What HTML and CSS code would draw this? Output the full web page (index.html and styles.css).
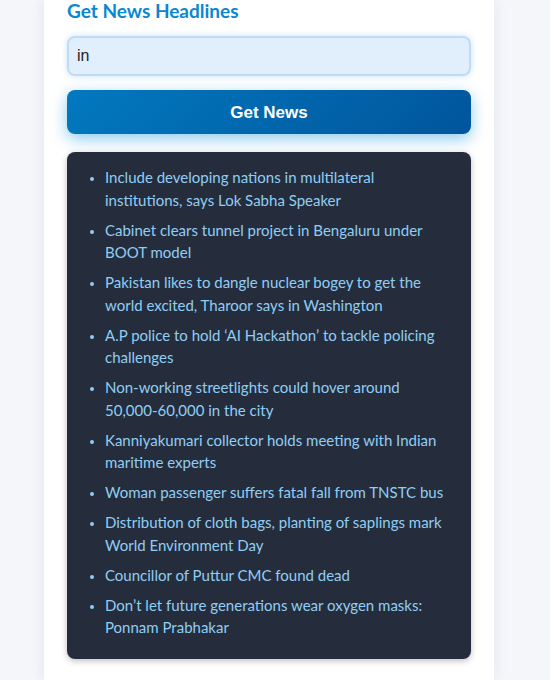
FILE: index.html
```html
<!DOCTYPE html>
<html>
<head>
<meta charset="utf-8">
<link rel="stylesheet" href="styles.css">
</head>
<body>
<div class="card">
  <h1 class="title">Get News Headlines</h1>
  <input class="search" type="text" value="in">
  <button class="btn">Get News</button>
  <ul class="news">
    <li>Include developing nations in multilateral institutions, says Lok Sabha Speaker</li>
    <li>Cabinet clears tunnel project in Bengaluru under BOOT model</li>
    <li>Pakistan likes to dangle nuclear bogey to get the world excited, Tharoor says in Washington</li>
    <li>A.P police to hold ‘AI Hackathon’ to tackle policing challenges</li>
    <li>Non-working streetlights could hover around 50,000-60,000 in the city</li>
    <li>Kanniyakumari collector holds meeting with Indian maritime experts</li>
    <li>Woman passenger suffers fatal fall from TNSTC bus</li>
    <li>Distribution of cloth bags, planting of saplings mark World Environment Day</li>
    <li>Councillor of Puttur CMC found dead</li>
    <li>Don’t let future generations wear oxygen masks: Ponnam Prabhakar</li>
  </ul>
</div>
</body>
</html>
```
FILE: styles.css
```css
html, body {
  margin: 0;
  padding: 0;
  background: #f4f6fa;
  height: 680px;
  overflow: hidden;
}
body {
  font-family: Lato, "Open Sans", sans-serif;
}
.card {
  width: 450px;
  height: 680px;
  box-sizing: border-box;
  margin: 0 0 0 44px;
  padding: 0 23px 20px;
  background: #ffffff;
  box-shadow: 0 0 14px rgba(30, 40, 80, 0.08);
}
.title {
  margin: 0;
  font-size: 19px;
  line-height: 22px;
  font-weight: 700;
  color: #0a87d2;
}
.search {
  display: block;
  box-sizing: border-box;
  width: 100%;
  height: 40px;
  margin-top: 14px;
  padding: 0 8px;
  border: 2px solid #bfdcf7;
  border-radius: 8px;
  background: #e1effc;
  box-shadow: 0 0 6px rgba(100, 170, 240, 0.35);
  font-family: "Liberation Sans", Arial, sans-serif;
  font-size: 16px;
  color: #222;
  outline: none;
}
.btn {
  display: block;
  width: 100%;
  height: 44px;
  margin-top: 14px;
  padding: 2px 0 0;
  border: none;
  border-radius: 8px;
  background: linear-gradient(135deg, #0279bf, #01559c);
  box-shadow: 0 5px 16px rgba(3, 140, 220, 0.45);
  color: #ffffff;
  font-family: "Liberation Sans", Arial, sans-serif;
  font-size: 17px;
  font-weight: 700;
  cursor: pointer;
}
.news {
  margin: 18px 0 0;
  padding: 14px 20px 12.5px 38px;
  background: #252d3d;
  border-radius: 8px;
  box-shadow: 0 2px 6px rgba(0, 0, 0, 0.25);
  color: #90cdf4;
  font-size: 15px;
  line-height: 22.5px;
}
.news li {
  margin-bottom: 7.5px;
}
.news li::marker {
  font-size: 13px;
}
```
